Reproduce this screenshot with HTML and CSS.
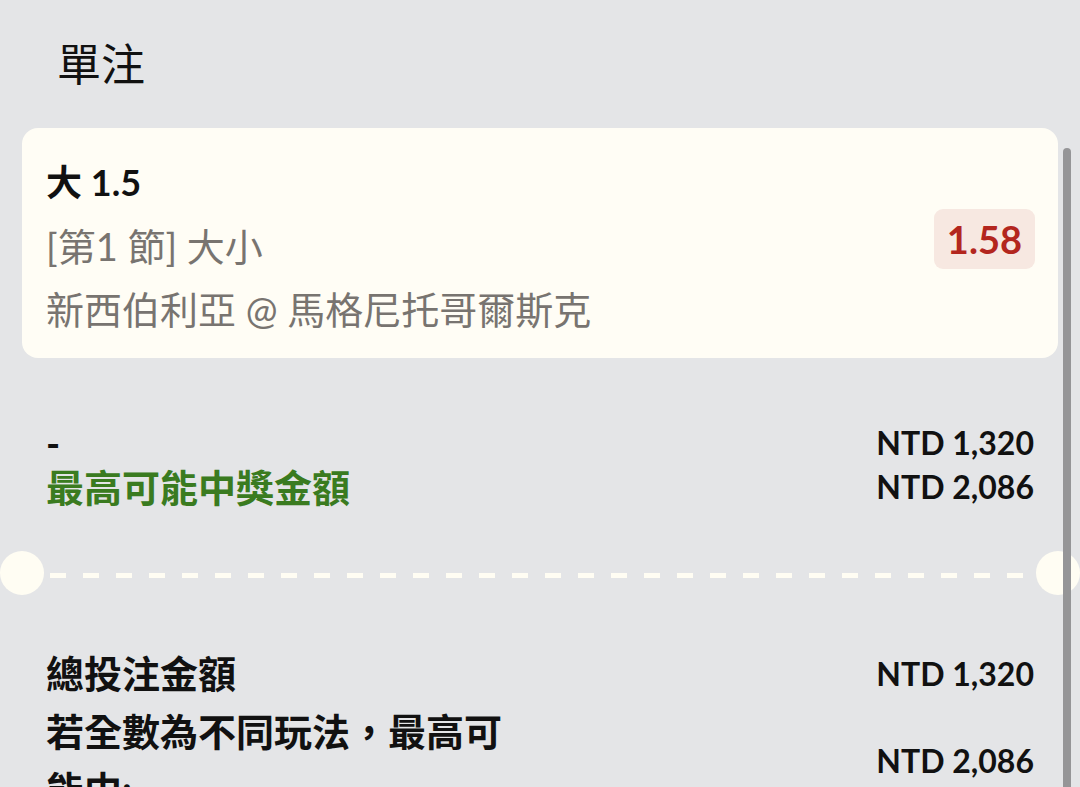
FILE: index.html
```html
<!DOCTYPE html>
<html lang="zh-Hant">
<head>
<meta charset="utf-8">
<title>單注</title>
<link rel="stylesheet" href="styles.css">
</head>
<body>
<div class="page">
  <h1 class="title">單注</h1>

  <div class="card">
    <div class="card-info">
      <div class="sel">大 1.5</div>
      <div class="market">[第1 節] 大小</div>
      <div class="match">新西伯利亞 @ 馬格尼托哥爾斯克</div>
    </div>
    <div class="odds">1.58</div>
  </div>

  <div class="summary">
    <div class="summary-labels">
      <div class="dash-label">-</div>
      <div class="win-label">最高可能中獎金額</div>
    </div>
    <div class="summary-values">
      <div>NTD 1,320</div>
      <div>NTD 2,086</div>
    </div>
  </div>

  <div class="divider">
    <span class="notch"></span>
    <span class="dashes"></span>
    <span class="notch"></span>
  </div>

  <div class="totals">
    <div class="total-row">
      <div class="total-label">總投注金額</div>
      <div class="total-value">NTD 1,320</div>
    </div>
    <div class="total-row">
      <div class="total-label">若全數為不同玩法，最高可能中:</div>
      <div class="total-value">NTD 2,086</div>
    </div>
  </div>

  <div class="scrollbar"></div>
</div>
</body>
</html>
```

FILE: styles.css
```css
* {
  box-sizing: border-box;
}

html, body {
  margin: 0;
  padding: 0;
  background: #e4e5e7;
  height: 787px;
  overflow: hidden;
}

body {
  font-family: Lato, "Noto Sans CJK TC", sans-serif;
  color: #111111;
}

.page {
  position: relative;
  width: 1080px;
  height: 787px;
  overflow: hidden;
}

.title {
  margin: 0;
  padding: 32px 0 0 57px;
  height: 128px;
  font-size: 44px;
  line-height: 60px;
  font-weight: 400;
  font-family: "Noto Sans CJK TC", sans-serif;
  color: #111111;
}

.card {
  margin: 0 22px;
  height: 230px;
  background: #fffdf5;
  border-radius: 16px;
  padding: 22px 23px 18px 24px;
  display: flex;
  align-items: center;
  justify-content: space-between;
}

.card-info {
  display: flex;
  flex-direction: column;
  align-self: stretch;
}

.sel {
  font-size: 36px;
  line-height: 65px;
  font-weight: 700;
  color: #111111;
}

.market {
  font-size: 38px;
  line-height: 63px;
  color: #787470;
}

.match {
  font-size: 38px;
  line-height: 62px;
  color: #787470;
}

.odds {
  background: #f7e8e1;
  color: #b3261e;
  border-radius: 9px;
  font-size: 38px;
  font-weight: 700;
  line-height: 60px;
  height: 60px;
  padding: 0 13px;
  margin-bottom: 12px;
}

.summary {
  margin-top: 63px;
  padding: 0 46px;
  display: flex;
  justify-content: space-between;
  font-size: 38px;
  line-height: 44px;
  font-weight: 700;
}

.summary-values {
  text-align: right;
  font-size: 32px;
}

.win-label {
  color: #3a7b20;
}

.divider {
  margin-top: 42px;
  height: 44px;
  display: flex;
  align-items: center;
}

.notch {
  width: 44px;
  height: 44px;
  border-radius: 50%;
  background: #fffdf3;
  flex: none;
}

.dashes {
  flex: 1;
  height: 5px;
  margin: 4px 6px 0;
  background: repeating-linear-gradient(90deg, #fffdf3 0, #fffdf3 16px, transparent 16px, transparent 33px);
}

.totals {
  margin-top: 49px;
  padding: 0 46px;
}

.total-row {
  display: flex;
  align-items: center;
  justify-content: space-between;
}

.total-label {
  max-width: 475px;
  font-size: 38px;
  line-height: 58px;
  font-weight: 700;
}

.total-value {
  font-size: 32px;
  font-weight: 700;
  text-align: right;
  white-space: nowrap;
}

.scrollbar {
  position: absolute;
  left: 1063px;
  top: 148px;
  width: 8px;
  height: 660px;
  border-radius: 4px;
  background: #959597;
}
```
